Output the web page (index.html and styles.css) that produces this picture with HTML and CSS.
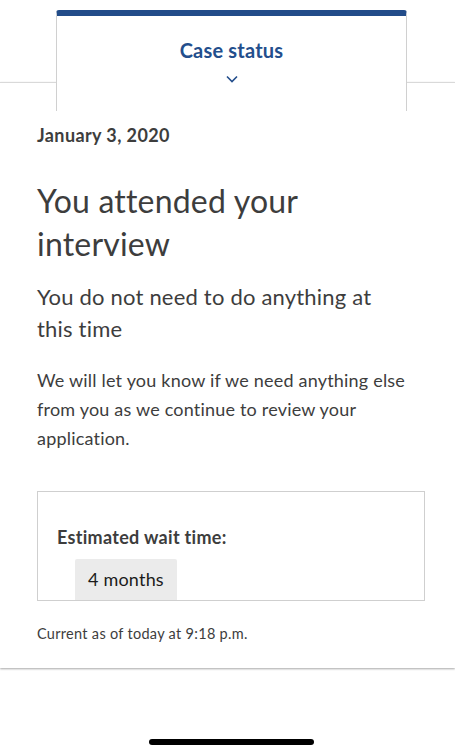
FILE: index.html
```html
<!DOCTYPE html>
<html lang="en">
<head>
<meta charset="UTF-8">
<meta name="viewport" content="width=device-width, initial-scale=1.0">
<title>Case status</title>
<link rel="stylesheet" href="styles.css">
</head>
<body>
    <div class="tab-bar">
        <div class="tab">
            <div class="tab-title">Case status</div>
            <svg class="chevron" width="12" height="8" viewBox="0 0 12 8">
                <polyline points="1,1.5 6,6.5 11,1.5" fill="none" stroke="#234e8c" stroke-width="1.6"/>
            </svg>
        </div>
    </div>

    <div class="card">
        <div class="date">January 3, 2020</div>
        <h1>You attended your interview</h1>
        <h2>You do not need to do anything at this time</h2>
        <p>We will let you know if we need anything else from you as we continue to review your application.</p>

        <div class="wait-box">
            <div class="wait-label">Estimated wait time:</div>
            <div class="wait-pill">4 months</div>
        </div>

        <div class="updated">Current as of today at 9:18 p.m.</div>
    </div>

    <div class="home-bar"></div>
</body>
</html>
```

FILE: styles.css
```css
body {
    margin: 0;
    background-color: #fff;
    font-family: Lato, "Liberation Sans", sans-serif;
    color: #3d3d3d;
}
.tab-bar {
    display: flex;
    padding-top: 10px;
}
.tab {
    position: relative;
    z-index: 1;
    box-sizing: border-box;
    width: 351px;
    height: 101px;
    margin-left: 56px;
    margin-bottom: -29px;
    border-top: 6px solid #224c89;
    border-left: 1px solid #d0d0d0;
    border-right: 1px solid #d0d0d0;
    border-radius: 3px 3px 0 0;
    background-color: #fff;
    display: flex;
    flex-direction: column;
    align-items: center;
    padding-top: 21px;
}
.tab-title {
    font-size: 20px;
    line-height: 26px;
    font-weight: bold;
    color: #234e8c;
    letter-spacing: 0.2px;
}
.chevron {
    margin-top: 12px;
}
.card {
    border-top: 1px solid #d9d9d9;
    padding: 40px 30px 24px 37px;
    box-shadow: 0 1px 2px rgba(0, 0, 0, 0.35);
}
.date {
    font-size: 18px;
    line-height: 24px;
    font-weight: bold;
    letter-spacing: 0.4px;
}
h1 {
    margin: 32px 0 0;
    font-size: 32px;
    line-height: 43px;
    font-weight: normal;
    letter-spacing: 0.2px;
}
h2 {
    max-width: 360px;
    margin: 16px 0 0;
    font-size: 22px;
    line-height: 32px;
    font-weight: normal;
    letter-spacing: 0.2px;
}
p {
    margin: 21px 0 0;
    font-size: 18px;
    line-height: 29px;
    letter-spacing: 0.2px;
}
.wait-box {
    margin-top: 38px;
    border: 1px solid #cfcfcf;
    padding: 33px 19px 0;
}
.wait-label {
    font-size: 18px;
    line-height: 24px;
    font-weight: bold;
    letter-spacing: 0.3px;
}
.wait-pill {
    display: inline-block;
    margin: 10px 0 0 18px;
    padding: 0 13px;
    height: 41px;
    line-height: 41px;
    font-size: 18px;
    color: #1b1b1b;
    background-color: #ebebeb;
    border-radius: 2px 2px 0 0;
    vertical-align: bottom;
    letter-spacing: 0.2px;
}
.updated {
    margin-top: 23px;
    font-size: 14.5px;
    line-height: 20px;
    letter-spacing: 0.3px;
}
.home-bar {
    width: 165px;
    height: 6px;
    margin: 71px auto 0 149px;
    border-radius: 3px;
    background-color: #000;
}
```
